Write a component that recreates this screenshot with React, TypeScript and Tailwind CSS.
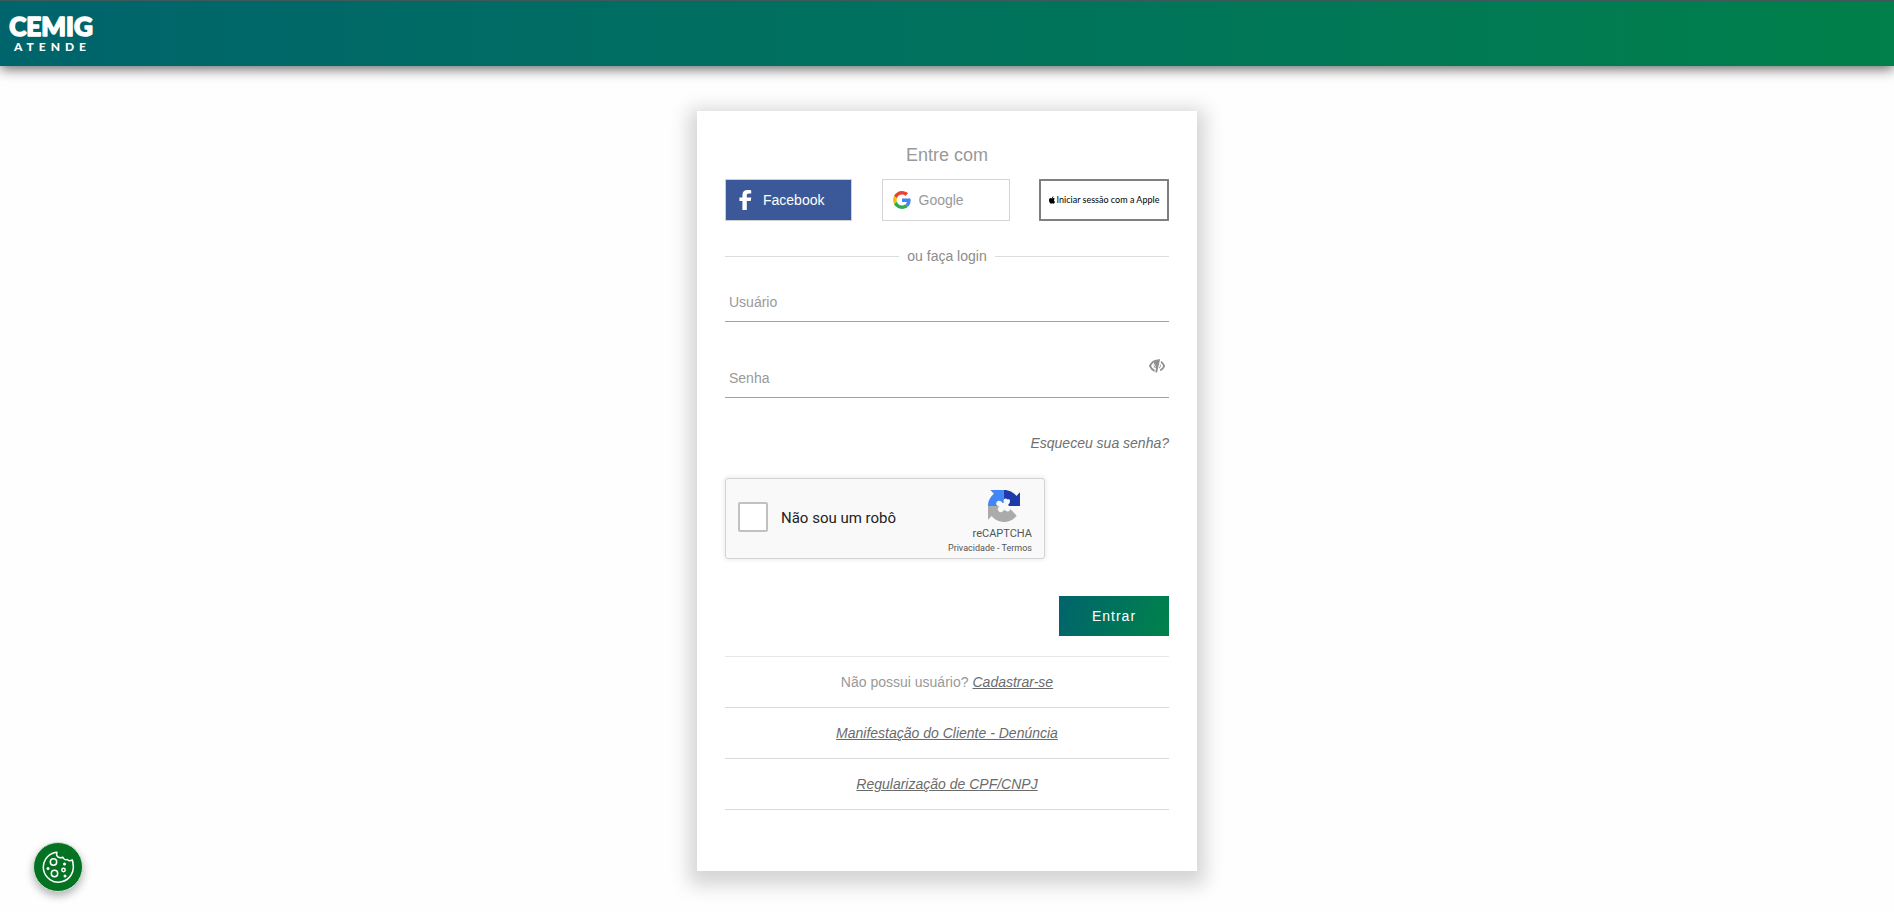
import { useState } from 'react'

const links = [
  { text: 'Não possui usuário?', label: 'Cadastrar-se' },
  { text: null, label: 'Manifestação do Cliente - Denúncia' },
  { text: null, label: 'Regularização de CPF/CNPJ' },
]

function Logo() {
  return (
    <a href="#" aria-label="Cemig Atende">
      <svg width="88" height="56" viewBox="0 0 88 56" fill="#fff" fontFamily="Lato, sans-serif">
        <text
          x="43"
          y="30"
          textAnchor="middle"
          fontSize="26"
          fontWeight="900"
          stroke="#fff"
          strokeWidth="1.6"
          strokeLinejoin="round"
        >
          CEMIG
        </text>
        <text x="6" y="45" fontSize="12" fontWeight="900" letterSpacing="5">
          ATENDE
        </text>
      </svg>
    </a>
  )
}

function FacebookIcon() {
  return (
    <svg width="13" height="20" viewBox="0 0 13 20" fill="#fff">
      <path d="M3.4 20v-9H.4V7.400h3V5.200C3.400 1.900 5.200 0 8.600 0c1.500 0 3 .2 3.600.3v3.200H10c-1.800 0-2.200.8-2.200 2v1.900h4.500L11.700 11H7.800v9z" />
    </svg>
  )
}

function GoogleIcon() {
  return (
    <svg width="18" height="18" viewBox="0 0 48 48">
      <path
        fill="#EA4335"
        d="M24 9.500c3.540 0 6.710 1.220 9.210 3.600l6.850-6.850C35.900 2.380 30.470 0 24 0 14.620 0 6.510 5.380 2.560 13.220l7.980 6.190C12.430 13.720 17.740 9.500 24 9.500z"
      />
      <path
        fill="#4285F4"
        d="M46.980 24.550c0-1.570-.15-3.090-.38-4.550H24v9.020h12.940c-.58 2.960-2.260 5.480-4.780 7.180l7.730 6c4.510-4.180 7.090-10.360 7.090-17.650z"
      />
      <path
        fill="#FBBC05"
        d="M10.530 28.590c-.48-1.450-.76-2.990-.76-4.590s.27-3.140.76-4.590l-7.980-6.190C.92 16.460 0 20.120 0 24c0 3.880.92 7.540 2.560 10.780l7.970-6.190z"
      />
      <path
        fill="#34A853"
        d="M24 48c6.480 0 11.930-2.130 15.890-5.810l-7.730-6c-2.150 1.450-4.920 2.300-8.160 2.300-6.260 0-11.570-4.220-13.470-9.910l-7.980 6.190C6.510 42.620 14.620 48 24 48z"
      />
    </svg>
  )
}

function AppleIcon() {
  return (
    <svg width="6" height="8" viewBox="0 0 18 22" fill="#000">
      <path d="M15 11.600c0-2.200 1.200-3.600 2.600-4.500-1-1.400-2.600-2.100-4.300-2.100-1.800 0-2.900 1-4 1S6.700 5 5.200 5C2.400 5 0 7.500 0 11.700 0 16.500 3.200 22 5.700 22c1.300 0 2-.9 3.700-.9s2.200.9 3.600.9c2.200 0 4.200-3.500 5-5.900-1.900-.8-3-2.500-3-4.500zM12.300 3.300C13 2.400 13.500 1.200 13.400 0c-1.200.1-2.500.8-3.300 1.700C9.400 2.500 8.800 3.700 9 4.900c1.200.1 2.500-.6 3.300-1.600z" />
    </svg>
  )
}

function EyeIcon() {
  return (
    <svg width="16" height="16" viewBox="0 0 16 16" fill="none">
      <path
        d="M9.500 2.400C6 2 2.800 4 .9 8c1.200 2.400 2.800 4 4.700 4.900"
        stroke="#8f8f8f"
        strokeWidth="1.800"
      />
      <path d="M4 4.500 11.200.8 8 14.800 6.200 14l.9-3.400C4.800 9.900 4 7.300 5.200 5z" fill="#8f8f8f" />
      <path d="M5.800 6.400c-.5 1-.2 2 .9 2.500" stroke="#fff" />
      <path
        d="M12 3.800c1.300.9 2.400 2.300 3.200 4.200-.9 2-2.200 3.500-3.900 4.400"
        stroke="#8f8f8f"
        strokeWidth="1.800"
      />
      <path d="M11.200 6.500c.5 1.400.1 2.800-1.200 3.700" stroke="#8f8f8f" />
    </svg>
  )
}

function RecaptchaIcon() {
  return (
    <svg width="32" height="32" viewBox="0 0 64 64">
      <path
        fill="#1C3AA9"
        d="M64 31.955l-.033-1.370V4.687l-7.160 7.160C50.948 4.674 42.033.093 32.050.093V32z"
      />
      <path
        fill="#4285F4"
        d="M31.862.094l-1.370.008H4.594l7.160 7.160C4.580 13.147 0 22.060 0 32.046h32z"
      />
      <path
        fill="#ABABAB"
        d="M.001 32.045l.033 1.370v25.898l7.160-7.160c5.860 7.173 14.774 11.754 24.760 11.754 10.390 0 19.620-4.960 25.440-12.636L39 32z"
      />
      <path
        fill="#f9f9f9"
        d="M32 25c-3-7 4-10 7-6 6-2 7 5 1 11 3 3 7 6 4 10-3 5-9 3-11-1-4 6-9 7-12 3-3-4-1-7 2-9-5-1-8-4-6-8 2-5 9-4 12 1z"
      />
    </svg>
  )
}

function CookieIcon() {
  return (
    <svg width="34" height="34" viewBox="0 0 34 34" fill="none" stroke="#fff" strokeWidth="1.500">
      <path
        d="M14 2.500A15 15 0 1 0 32 14c0-1.800-.2-3-.8-4.200-1.600 1.300-3.700 1.200-4.900-.4-1.900.8-4-.2-4.400-2.200-2.500 1-5.200.4-6-1.600-.4-1-.5-2.200.1-3.300z"
        strokeLinejoin="round"
      />
      <circle cx="12.500" cy="12" r="3.200" />
      <circle cx="13.500" cy="23.500" r="3.200" />
      <circle cx="22.500" cy="20" r="1.700" />
      <g fill="#fff" stroke="none">
        <circle cx="23.500" cy="14" r="1.500" />
        <circle cx="7" cy="18.500" r="1.500" />
        <circle cx="24" cy="26" r="1.500" />
      </g>
    </svg>
  )
}

export default function App() {
  const [showPassword, setShowPassword] = useState(false)

  return (
    <div className="min-h-screen bg-[#fefefe] font-['Liberation_Sans',Arial,sans-serif] text-sm text-[#999]">
      <header className="flex h-[66px] items-center border-t border-[#3d5a5a] bg-linear-to-r from-[#00646c] to-[#00804a] px-2 shadow-[0_3px_12px_rgba(0,0,0,0.6)]">
        <Logo />
      </header>

      <main className="mx-auto mt-[45px] w-full max-w-[500px] bg-white px-7 pt-[30px] pb-[61px] shadow-[0_6px_18px_8px_rgba(0,0,0,0.17)]">
        <h1 className="text-center text-lg leading-7">Entre com</h1>

        <div className="mt-[10px] flex justify-between">
          <button className="flex h-[42px] w-[127px] items-center gap-[11px] border border-[#d0d0d0] bg-[#3b5998] pl-[13px] text-white">
            <FacebookIcon />
            Facebook
          </button>
          <button className="flex h-[42px] w-32 items-center gap-2 border border-[#d5d5d5] bg-white pl-[10px]">
            <GoogleIcon />
            Google
          </button>
          <button className="flex h-[42px] w-[130px] items-center justify-center gap-[2px] border-2 border-[#7f7f7f] bg-white font-[Lato,sans-serif] text-[9px] whitespace-nowrap text-black">
            <AppleIcon />
            Iniciar sessão com a Apple
          </button>
        </div>

        <div className="mt-[25px] flex items-center gap-2 leading-5 text-[#8c8c8c]">
          <span className="h-px flex-1 bg-[#dcdedd]" />
          ou faça login
          <span className="h-px flex-1 bg-[#dcdedd]" />
        </div>

        <form onSubmit={(e) => e.preventDefault()}>
          <input
            type="text"
            aria-label="Usuário"
            placeholder="Usuário"
            className="mt-4 block h-10 w-full border-b border-[#a3a3a3] px-1 outline-none placeholder:text-[#999]"
          />
          <div className="relative mt-9">
            <input
              type={showPassword ? 'text' : 'password'}
              aria-label="Senha"
              placeholder="Senha"
              className="block h-10 w-full border-b border-[#a3a3a3] px-1 outline-none placeholder:text-[#999]"
            />
            <button
              type="button"
              aria-label="Mostrar senha"
              onClick={() => setShowPassword(!showPassword)}
              className="absolute top-0 right-1"
            >
              <EyeIcon />
            </button>
          </div>

          <div className="mt-[35px] text-right leading-5">
            <a href="#" className="text-[#707070] italic">
              Esqueceu sua senha?
            </a>
          </div>

          <div className="mt-[25px] flex h-[81px] w-80 items-start rounded-[3px] border border-[#d3d3d3] bg-[#f9f9f9] pt-[11px] pr-3 pl-3 font-[Roboto,sans-serif] text-[#222] shadow-[0_0_4px_1px_rgba(0,0,0,0.08)]">
            <label className="flex flex-1 items-center gap-[13px] pt-3 text-[15px]">
              <input
                type="checkbox"
                className="size-[30px] appearance-none rounded-[2px] border-2 border-[#c1c1c1] bg-white"
              />
              <span className="pt-1">Não sou um robô</span>
            </label>
            <div className="flex flex-col items-end text-[#555]">
              <div className="mr-3">
                <RecaptchaIcon />
              </div>
              <span className="pt-1 text-[11px] leading-4">reCAPTCHA</span>
              <span className="text-[9px] leading-3">
                <a href="#">Privacidade</a> - <a href="#">Termos</a>
              </span>
            </div>
          </div>

          <div className="mt-[37px] flex justify-end">
            <button
              type="submit"
              className="h-10 w-[110px] bg-[linear-gradient(105deg,#00646c,#00824b)] tracking-[1px] text-white"
            >
              Entrar
            </button>
          </div>
        </form>

        <ul className="mt-5 border-t border-[#e8e8e8] text-center">
          {links.map(({ text, label }) => (
            <li
              key={label}
              className="flex h-[51px] items-center justify-center gap-1 border-b border-[#d9dbda]"
            >
              {text}
              <a href="#" className="text-[#6b6b6b] italic underline">
                {label}
              </a>
            </li>
          ))}
        </ul>
      </main>

      <button
        aria-label="Cookies"
        className="fixed bottom-5 left-[33px] flex size-[50px] items-center justify-center rounded-full border border-[#cfe5d3] bg-[#047223] shadow-[0_4px_9px_rgba(0,0,0,0.3)]"
      >
        <CookieIcon />
      </button>
    </div>
  )
}
